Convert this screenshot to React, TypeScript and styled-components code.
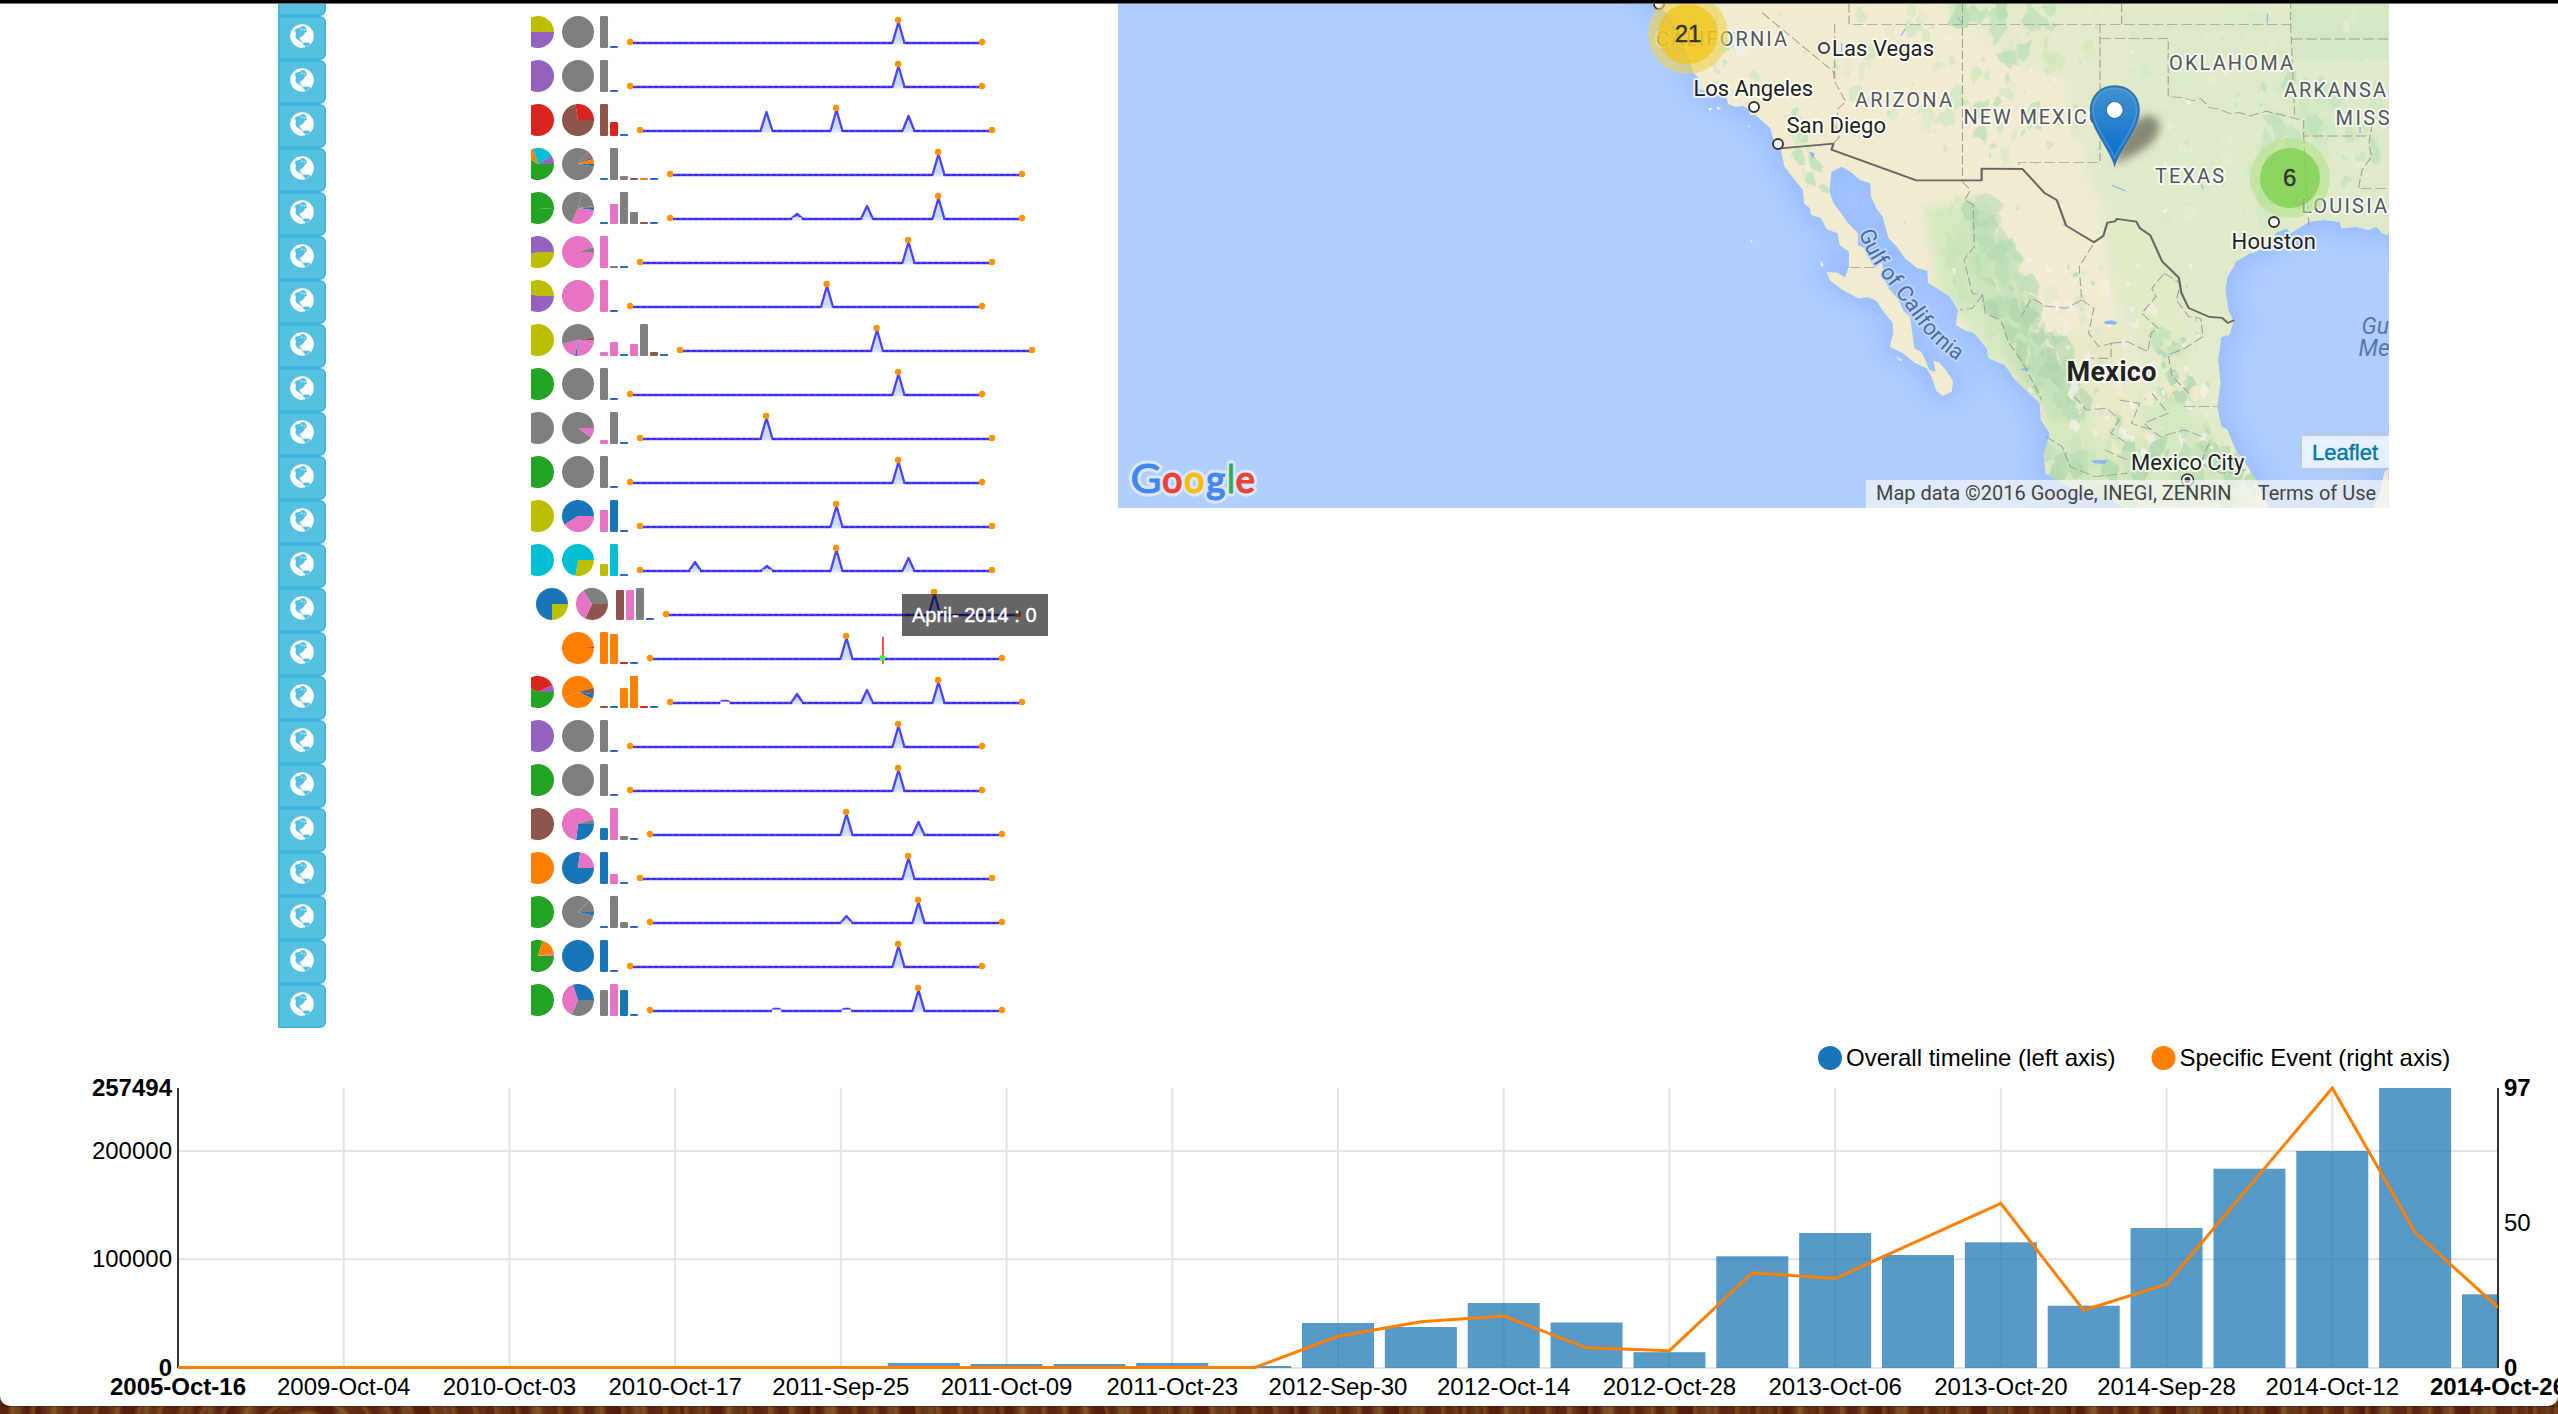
import React from "react";
import styled, { createGlobalStyle } from "styled-components";

const GlobalStyle = createGlobalStyle`
  html, body { margin: 0; padding: 0; }
  body { width: 2558px; height: 1414px; overflow: hidden; background: #5c2c10; }
  svg { display: block; }
`;

const sans = `"Liberation Sans", Arial, sans-serif`;
const mapFont = `Roboto, "Liberation Sans", sans-serif`;

/* ---------- palette ---------- */
const C = {
  blue: "#1876b8",
  orange: "#ff8000",
  green: "#22a422",
  red: "#d92420",
  purple: "#9563be",
  brown: "#8d564a",
  pink: "#e673c3",
  grey: "#7f7f7f",
  olive: "#bbbf00",
  cyan: "#00bed3",
  tail: "#2c68cc",
};
type Hue = keyof typeof C;

/* ---------- page shell ---------- */
const Desktop = styled.div`
  display: flex;
  flex-direction: column;
  width: 2558px;
  height: 1414px;
  overflow: hidden;
  background:
    linear-gradient(rgba(40, 14, 2, 0.55), rgba(40, 14, 2, 0) 3px) 0 1405px / 100% 9px no-repeat,
    repeating-radial-gradient(ellipse 70px 46px at 12% 101%, rgba(140, 92, 38, 0.55) 0 3px, rgba(86, 32, 12, 0.45) 7px 12px, transparent 15px 21px),
    repeating-linear-gradient(86deg, #5c2710 0 9px, #734420 14px 19px, #531e0b 27px 40px, #7b4e26 49px 53px, #5f2a12 66px 83px, #6d3c1a 92px 97px);
`;

const TopEdge = styled.div`
  flex: none;
  height: 3px;
  background: #000;
  border-bottom: 1px solid #6e6e6e;
`;

const Sheet = styled.main`
  flex: none;
  display: flex;
  flex-direction: column;
  height: 1402px;
  overflow: hidden;
  background: #fff;
  border-radius: 0 0 10px 10px;
`;

const Upper = styled.section`
  display: flex;
  height: 1026px;
`;

/* ---------- list of rows ---------- */
const RowList = styled.div`
  position: relative;
  flex: none;
  width: 840px;
  padding-left: 278px;
`;

const Row = styled.div`
  display: flex;
  align-items: flex-start;
  height: 44px;
`;

const GlobeButton = styled.button<{ $stub?: boolean }>`
  flex: none;
  display: flex;
  justify-content: center;
  align-items: flex-start;
  box-sizing: border-box;
  width: 48px;
  height: ${(p) => (p.$stub ? 12 : 44)}px;
  margin: 0;
  padding: 6px 0 0;
  border: 2px solid #40b6da;
  border-top-width: ${(p) => (p.$stub ? 0 : 2)}px;
  border-radius: ${(p) => (p.$stub ? "0 0 6px 0" : "0 6px 6px 0")};
  background: #56c0e0;
`;

const Glyphs = styled.div<{ $lead: number }>`
  display: flex;
  height: 32px;
  width: 587px;
  margin-left: 205px;
  overflow: hidden;
  & > :first-child { margin-left: ${(p) => p.$lead}px; }
`;

const Spacer = styled.span<{ $w: number }>`
  flex: none;
  width: ${(p) => p.$w}px;
`;

const Graphic = styled.svg`
  flex: none;
`;

const Tooltip = styled.div`
  position: absolute;
  left: 902px;
  top: 590px;
  box-sizing: border-box;
  width: 146px;
  height: 42px;
  padding-left: 10px;
  background: rgba(0, 0, 0, 0.6);
  color: #fff;
  font: 20px/42px ${sans};
  white-space: nowrap;
  -webkit-text-stroke: 0.4px #fff;
`;

type Slice = [Hue, number];
type RowData = {
  a: Slice[];
  b: Slice[];
  bars: Slice[];
  peaks: [number, number][];
  inset?: boolean;
  cursor?: number;
};

const one = (h: Hue): Slice[] => [[h, 360]];
const last: [number, number][] = [[258.5, 22]];

/* pie slices: [hue, end angle clockwise from east]; peaks: [distance from the first point, height] */
const rows: RowData[] = [
  { a: [["purple", 180], ["olive", 360]], b: one("grey"), bars: [["grey", 32]], peaks: last },
  { a: one("purple"), b: one("grey"), bars: [["grey", 32]], peaks: last },
  { a: one("red"), b: [["brown", 261], ["red", 360]], bars: [["brown", 32], ["red", 14]], peaks: [[116.5, 20], [186.5, 22], [258.5, 16]] },
  {
    a: [["green", 212], ["orange", 252], ["cyan", 330], ["purple", 360]],
    b: [["blue", 9], ["grey", 309], ["grey", 333], ["brown", 342], ["orange", 360]],
    bars: [["blue", 2], ["grey", 32], ["grey", 4], ["brown", 2], ["orange", 2]],
    peaks: last,
  },
  {
    a: [["green", 4], ["green", 360]],
    b: [["blue", 8], ["pink", 115], ["grey", 285], ["grey", 353], ["grey", 360]],
    bars: [["blue", 2], ["pink", 20], ["grey", 32], ["grey", 12], ["brown", 2]],
    peaks: [[117, 6], [187, 14], [258.5, 22]],
  },
  { a: [["olive", 164], ["purple", 360]], b: [["pink", 343], ["grey", 360]], bars: [["pink", 32], ["grey", 2]], peaks: last },
  { a: [["purple", 195], ["olive", 360]], b: one("pink"), bars: [["pink", 32]], peaks: [[187, 22]] },
  {
    a: one("olive"),
    b: [["pink", 21], ["pink", 94], ["blue", 101], ["pink", 166], ["grey", 349], ["brown", 360]],
    bars: [["pink", 4], ["pink", 14], ["blue", 2], ["pink", 12], ["grey", 32], ["brown", 4]],
    peaks: [[187, 22]],
  },
  { a: one("green"), b: one("grey"), bars: [["grey", 32]], peaks: last },
  { a: one("grey"), b: [["pink", 37], ["grey", 360]], bars: [["pink", 4], ["grey", 32]], peaks: [[116.5, 22]] },
  { a: one("green"), b: one("grey"), bars: [["grey", 32]], peaks: last },
  { a: one("olive"), b: [["pink", 148], ["blue", 360]], bars: [["pink", 22], ["blue", 32]], peaks: [[186.5, 22]] },
  { a: one("cyan"), b: [["olive", 99], ["cyan", 360]], bars: [["olive", 12], ["cyan", 32]], peaks: [[45, 10], [117, 6], [186.5, 22], [258.5, 14]] },
  {
    a: [["olive", 90], ["blue", 360]],
    b: [["brown", 115], ["pink", 238], ["grey", 360]],
    bars: [["brown", 30], ["pink", 30], ["grey", 32]],
    peaks: last,
    inset: true,
  },
  { a: [], b: [["orange", 356], ["red", 360]], bars: [["orange", 32], ["orange", 30], ["red", 2]], peaks: [[186.5, 22]], cursor: 243 },
  {
    a: [["green", 208], ["red", 335], ["purple", 360]],
    b: [["brown", 8], ["blue", 25], ["orange", 157], ["orange", 345], ["brown", 360]],
    bars: [["brown", 2], ["blue", 2], ["orange", 20], ["orange", 32], ["red", 2]],
    peaks: [[45, 2.5], [117, 10], [187, 14], [258.5, 22]],
  },
  { a: one("purple"), b: one("grey"), bars: [["grey", 32]], peaks: last },
  { a: one("green"), b: one("grey"), bars: [["grey", 32]], peaks: last },
  { a: one("brown"), b: [["blue", 97], ["pink", 343], ["grey", 360]], bars: [["blue", 12], ["pink", 32], ["grey", 4]], peaks: [[186.5, 22], [258.5, 14]] },
  { a: one("orange"), b: [["blue", 278], ["pink", 360]], bars: [["blue", 32], ["pink", 10]], peaks: last },
  { a: one("green"), b: [["blue", 14], ["grey", 315], ["grey", 360]], bars: [["blue", 2], ["grey", 32], ["grey", 6]], peaks: [[186.5, 8], [258.5, 22]] },
  { a: [["green", 287], ["orange", 352], ["pink", 360]], b: one("blue"), bars: [["blue", 32]], peaks: last },
  { a: one("green"), b: [["grey", 114], ["pink", 252], ["blue", 360]], bars: [["grey", 26], ["pink", 32], ["blue", 26]], peaks: [[116.5, 2.5], [186.5, 2.5], [258.5, 22]] },
];

const Pie = ({ slices }: { slices: Slice[] }) => {
  let from = 0;
  const at = (deg: number) => {
    const r = (deg * Math.PI) / 180;
    return `${16 + 16 * Math.cos(r)} ${16 + 16 * Math.sin(r)}`;
  };
  return (
    <Graphic width="32" height="32">
      {slices.length === 1 && <circle cx="16" cy="16" r="16" fill={C[slices[0][0]]} />}
      {slices.length > 1 &&
        slices.map(([hue, to], i) => {
          const d = `M16 16 L${at(from)} A16 16 0 ${to - from > 180 ? 1 : 0} 1 ${at(to)} Z`;
          from = to;
          return <path key={i} d={d} fill={C[hue]} />;
        })}
    </Graphic>
  );
};

const MiniBars = ({ bars }: { bars: Slice[] }) => {
  const all: Slice[] = [...bars, ["tail", 2]];
  return (
    <Graphic width={all.length * 10} height="32">
      {all.map(([hue, h], i) => (
        <rect key={i} x={i * 10} y={32 - h} width="8" height={h} rx={h > 3 ? 1.2 : 0.8} fill={C[hue]} />
      ))}
    </Graphic>
  );
};

const base = 27;
const Spark = ({ peaks, cursor }: { peaks: [number, number][]; cursor?: number }) => {
  const mids = peaks.map(([x, h]): [number, number] => [x + 20, h]);
  const pts = mids
    .map(([x, h]) =>
      h < 4
        ? `${x - 5} ${base} L${x - 3} ${base - h + 0.5} L${x + 3} ${base - h + 0.5} L${x + 5} ${base}`
        : `${x - 6} ${base} L${x} ${base - h + 1} L${x + 6} ${base}`
    )
    .join(" L");
  const top = mids.find((p) => p[1] === 22)!;
  return (
    <Graphic width="372" height="32">
      {mids.map(([x, h], i) => (
        <path key={i} d={`M${x - 6} ${base} L${x} ${base - h + 1} L${x + 6} ${base} Z`} fill="#c9dcfa" />
      ))}
      <path d={`M10 ${base} L${pts} L362 ${base}`} fill="none" stroke="#4a42ff" strokeWidth="2.3" strokeLinejoin="round" />
      <path d={`M10 ${base} H362`} stroke="#2f20e6" strokeWidth="2" strokeDasharray="4 2" opacity="0.6" />
      {mids.map(([x, h], i) => (
        <path key={i} d={`M${x - 4.6} ${base} H${x + 4.6}`} stroke={h > 4 ? "#dbe7fc" : "#fff"} strokeWidth="2.8" />
      ))}
      {cursor && <path d={`M${cursor - 10} 4.7 V31.7`} stroke="none" />}
      {cursor && <path d={`M${cursor} 4.7 V31.7`} stroke="#ff4b4b" strokeWidth="2" />}
      {cursor && <circle cx={cursor - 0.6} cy="26" r="3" fill="#3df13d" />}
      <circle cx="10" cy="26" r="3.2" fill="#ff9300" />
      <circle cx="362" cy="26" r="3.2" fill="#ff9300" />
      <circle cx={top[0] - 0.4} cy="4" r="3.2" fill="#ff9300" />
    </Graphic>
  );
};

const Globe = () => (
  <Graphic width="24" height="24" viewBox="0 0 24 24">
    <circle cx="12" cy="12" r="11.8" fill="#fff" />
    <path
      fill="#56c0e0"
      d="M5.2 5.6 7 4.2 9.6 4 11 2.6 14.4 2 15.6 3 14.8 3.8 16.6 4.2 16.2 5.6 16.9 7 15.4 8.2 14.2 10 13.2 11.6 12 12.6 10.4 13.2 9.4 14.4 9.4 15.4 10.8 15.4 11.2 17 12.6 18 12 18.8 10 17 8 16 6.2 14.6 5.4 12 6 9.4 5.2 8Z M12.2 19.4 14.4 18.6 19.8 18.8 20 20.4 18 21.6 15.4 23.2 14.6 21.6Z"
    />
    <path fill="#fff" d="M10.6 5 12.6 4.4 12.8 5.2 11 5.8Z M13.6 5.8 15 5.6V6.6H13.8Z" />
  </Graphic>
);

/* ---------- map ---------- */
const MapPane = styled.div`
  position: relative;
  flex: none;
  width: 1270.6px;
  height: 504px;
  overflow: hidden;
  background: #b0cfff;
`;

const Cluster = styled.div<{ $x: number; $y: number; $in: string; $out: string }>`
  position: absolute;
  left: ${(p) => p.$x - 40}px;
  top: ${(p) => p.$y - 40}px;
  display: grid;
  place-items: center;
  width: 80px;
  height: 80px;
  border-radius: 50%;
  background: ${(p) => p.$out};
  font: 24px/60px ${sans};
  color: #333;
  text-align: center;
  -webkit-text-stroke: 0.4px #333;
  & > span {
    width: 60px;
    height: 60px;
    border-radius: 50%;
    background: ${(p) => p.$in};
  }
`;

const LeafletTag = styled.div`
  position: absolute;
  right: 0;
  top: 432px;
  width: 86.6px;
  height: 32px;
  padding-left: 10px;
  box-sizing: border-box;
  background: rgba(255, 255, 255, 0.7);
  box-shadow: 0 0 10px rgba(190, 190, 190, 0.8);
  color: #0078a8;
  font: 22px/33px ${sans};
  -webkit-text-stroke: 0.4px #0078a8;
`;

const Credits = styled.div`
  position: absolute;
  right: 0;
  bottom: 0;
  display: flex;
  justify-content: space-between;
  box-sizing: border-box;
  width: 522.6px;
  height: 28px;
  padding: 0 12.5px 0 10px;
  background: rgba(245, 245, 245, 0.7);
  color: #444;
  font: 20px/27px ${mapFont};
  white-space: nowrap;
`;

const land =
  "M-275 0 L-262 12 -235 32 -210 70 -190 130 -172 180 -164 215 -149 238 -148 268 -118 280 -82 295 -78 312 -62 320 -40 318 -28 328 -24 345 -12 345 0 357 " +
  "25 385 35 425 50 440 60 500 85 540 105 570 108 610 122 625 125 645 150 655 163 688 190 700 195 735 218 755 218 800 208 832 190 818 163 816 172 842 200 868 240 895 265 892 285 902 300 930 325 970 326 1000 318 1040 350 1060 378 1088 408 1105 420 1130 432 1172 447 1188 470 1175 473 1142 455 1110 440 1088 425 1082 430 1115 415 1110 405 1080 395 1055 378 1045 372 990 368 950 350 930 340 900 315 865 303 835 300 790 282 770 265 750 240 735 240 700 215 668 205 650 180 610 170 575 175 515 " +
  "200 500 225 518 245 540 270 550 272 590 285 625 300 650 315 715 335 740 355 775 385 805 410 812 412 850 440 870 465 890 485 930 480 975 500 990 525 1000 555 1045 560 1075 600 1095 625 1140 660 1180 685 1210 688 1260 710 1300 695 1370 700 1420 740 1450 790 1480 860 1500 900 1530 1540 1530 1540 1405 1530 1415 1518 1480 1500 1530 1250 1530 " +
  "1215 1440 1195 1400 1165 1350 1145 1290 1130 1280 1120 1220 1128 1150 1122 1080 1130 1010 1150 1005 1160 962 1148 935 1140 870 1145 830 1160 800 1165 785 1200 760 1215 755 1255 728 1262 700 1290 685 1300 700 1345 665 1380 660 1420 665 1425 685 1460 680 1490 690 1510 680 1525 700 1540 705 L1540 0Z";

const rnd = (() => {
  let s = 9127;
  return () => ((s = (s * 16807) % 2147483647) / 2147483647);
})();

type Patch = { d: string; fill: string; o: number };
const scatter = (n: number, x0: number, y0: number, w: number, h: number, slope: number, size: number, fills: string[], o: number): Patch[] =>
  Array.from({ length: n }, () => {
    const y = y0 + rnd() * h;
    const x = x0 + rnd() * w + slope * (y - y0);
    const k = size * (0.3 + rnd());
    const pts = Array.from({ length: 7 }, (_, i) => {
      const a = (i / 7) * Math.PI * 2;
      const r = k * (0.3 + rnd());
      return `${(x + Math.cos(a) * r * 0.8 + Math.sin(a) * r * slope * 0.7).toFixed(1)} ${(y + Math.sin(a) * r * 1.3).toFixed(1)}`;
    });
    return { d: `M${pts.join("L")}Z`, fill: fills[Math.floor(rnd() * fills.length)], o };
  });

const patches: Patch[] = [
  ...scatter(70, 180, 0, 640, 480, 0, 22, ["#dce9c6", "#d3e7c0", "#e9e8cc"], 0.8),
  ...scatter(24, 500, 0, 240, 440, 0, 24, ["#bfe1b9", "#cfe6be"], 0.8),
  ...scatter(14, 480, 0, 250, 90, 0, 32, ["#b9dfb5", "#c7e4bd"], 0.9),
  ...scatter(20, -240, 0, 150, 250, 0.35, 20, ["#bfe4c0", "#d2e8c8", "#f1efe6"], 0.9),
  ...scatter(24, 40, 320, 60, 260, 0.3, 16, ["#c3e3bc", "#dce9c6"], 0.9),
  ...scatter(45, 860, 20, 640, 640, 0, 24, ["#e4edd2", "#d6e8c3", "#dcebc8"], 0.7),
  ...scatter(60, 1220, 230, 300, 420, 0, 30, ["#bfe1b9", "#c7e4c0", "#d3e8c6"], 0.75),
  ...scatter(50, 400, 620, 130, 600, 0.38, 34, ["#d6e8c2", "#cce5bd"], 0.8),
  ...scatter(60, 500, 600, 70, 620, 0.38, 30, ["#bbddb4", "#b3d8ae", "#c3e1bb"], 0.7),
  ...scatter(40, 560, 900, 90, 340, 0.4, 24, ["#b0d6ab", "#bbddb4"], 0.7),
  ...scatter(60, 690, 780, 360, 460, 0.1, 18, ["#dce9c6", "#e7eacb", "#f1efe0"], 0.8),
  ...scatter(20, 950, 990, 70, 200, 0.2, 18, ["#b3d8ae", "#c3e1bb"], 0.8),
  ...scatter(50, 740, 1160, 420, 230, 0.1, 18, ["#cce5bd", "#f2f0ea", "#bfe1b9", "#f1e9cb"], 0.8),
  ...scatter(60, 700, 1340, 520, 160, 0, 30, ["#bbddb4", "#b3d8ae", "#cbe3bd"], 0.8),
  ...scatter(90, 0, 20, 1500, 640, 0, 6, ["#f3f1ea", "#cfe6be"], 0.9),
  ...scatter(70, 240, 640, 820, 720, 0.1, 7, ["#f3f1ea", "#b9dfb5"], 0.9),
];

const stateLines = [
  "M218 12 V73 H1300 V12 M886 12 V73 M496 12 V545",
  "M833 73 V488 H634 V505",
  "M833 115 H1000 V290 L1030 292 1060 302 1080 296 1100 322 1125 328 1150 340 1175 338 1200 348 1240 334 1280 345 1332 362 V408 H1495",
  "M1300 73 L1310 350 M1303 117 H1540",
  "M5 38 L180 215 183 245 210 305 192 325 185 380 194 412 178 432",
  "M183 73 V235",
  "M1500 370 L1492 430 1498 470 1475 510 1466 566 H1540 M1332 408 L1340 590 1345 680",
  "M220 803 H290",
  "M496 545 L515 570 502 600 522 615 525 740 500 780 520 880 545 885 552 940 590 960 610 1030 640 1080 670 1150 690 1200",
  "M545 885 L520 925 490 930 M815 735 L782 800 788 900 750 925 700 918 665 895 640 950",
  "M788 900 L818 925 805 1000 830 1040 860 1030 860 1075 810 1075 M860 1030 L900 1025 950 1055 958 1000 975 985 935 940 970 890 960 865 990 820",
  "M990 820 L1030 850 1020 900 1050 950 1080 955 1085 1010 1040 1045 1000 1065 1010 1130 1050 1180",
  "M770 1190 L800 1230 850 1225 880 1260 860 1300 900 1330 M960 1180 L1000 1240 940 1270 980 1310 1040 1290 1085 1310 M1040 1220 H1120",
  "M700 1310 L740 1340 760 1400 820 1430 900 1420 M880 1200 L930 1210 910 1270 960 1290",
  "M845 1350 L900 1380 M1100 1330 L1080 1390 1130 1420 1190 1410",
];

type LabelProps = { x: number; y: number; w?: number; size?: number; spaced?: boolean; children: string };
const MapLabel = styled.text<{ $state?: boolean }>`
  font-family: ${mapFont};
  fill: ${(p) => (p.$state ? "#55565a" : "#222")};
  paint-order: stroke;
  stroke: rgba(255, 255, 255, 0.75);
  stroke-width: 4px;
  stroke-linejoin: round;
`;
const Label = ({ x, y, w, size = 22, spaced, children }: LabelProps) => (
  <MapLabel x={x} y={y} textLength={w} fontSize={size} $state={spaced}>
    {children}
  </MapLabel>
);

const cities: [number, number][] = [[706, 44], [636, 103], [660, 140], [1156, 218], [541, 0]];

const LogoLetters = () => {
  const letters: [string, string, number, number][] = [
    ["G", "#4285f4", 12.5, 31],
    ["o", "#ea4335", 44, 20.5],
    ["o", "#fbbc05", 66, 20.5],
    ["g", "#4285f4", 88, 19.5],
    ["l", "#34a853", 109.5, 7],
    ["e", "#ea4335", 117.5, 19.5],
  ];
  const draw = (halo: boolean) =>
    letters.map(([ch, col, x, w], i) => (
      <text
        key={i}
        x={x}
        y={488.5}
        fontSize={ch === "G" ? 41 : 39}
        textLength={w}
        lengthAdjust="spacingAndGlyphs"
        fontFamily={`Lato, "Open Sans", sans-serif`}
        fontWeight={ch === "G" ? 400 : 600}
        fill={col}
        stroke={halo ? "#dbe8fd" : col}
        strokeWidth={halo ? 7 : 1}
        strokeLinejoin="round"
        aria-hidden={halo}
      >
        {ch}
      </text>
    ));
  return (
    <g>
      <g>{draw(true)}</g>
      <g>{draw(false)}</g>
    </g>
  );
};

const MapDrawing = () => (
  <Graphic width="1271" height="504">
    <defs>
      <clipPath id="land"><path d={land} /></clipPath>
      <filter id="haze" x="-20%" y="-20%" width="140%" height="140%"><feGaussianBlur stdDeviation="36" /></filter>
      <filter id="soft" x="-20%" y="-20%" width="140%" height="140%"><feGaussianBlur stdDeviation="14" /></filter>
      <filter id="shade" x="-50%" y="-50%" width="200%" height="200%"><feGaussianBlur stdDeviation="4.5" /></filter>
      <linearGradient id="pin" x1="0" y1="0" x2="0" y2="1">
        <stop offset="0" stopColor="#4292ce" />
        <stop offset="1" stopColor="#086ccd" />
      </linearGradient>
      <path id="gulf" d="M741 228 C752 262 772 280 790 306 C808 332 818 342 838 356" />
    </defs>
    <g transform="translate(642 -4) scale(.4082 .3333)">
      <path d={land} fill="#93b7ff" stroke="#93b7ff" strokeWidth="60" filter="url(#haze)" opacity="0.78" />
      <path d={land} fill="#f1ebcf" />
      <g clipPath="url(#land)">
        <path d="M830 0 H1560 V1000 H1060 L1020 840 940 660 860 650 810 560 780 300Z" fill="#deeac8" filter="url(#soft)" />
        <path d="M420 0 H900 V500 L780 420 760 250 640 200 560 120Z" fill="#e5eaca" filter="url(#soft)" />
        <path d="M1300 0 H1560 V180 H1310Z" fill="#d5e8c3" />
        <path d="M400 620 L520 600 620 800 660 1000 780 1150 1080 1180 1220 1530 680 1530 700 1200 560 1060 440 880Z" fill="#d6e8c2" filter="url(#soft)" />
        <path d="M840 640 L960 660 1060 900 1080 1100 960 1180 900 1000 860 860Z" fill="#dfeac7" filter="url(#soft)" />
        <path d="M700 1010 L900 960 940 1300 840 1330 780 1180Z" fill="#e9e9ca" filter="url(#soft)" />
        <path d="M1040 900 L1160 920 1120 1220 1200 1400 1060 1240Z" fill="#e0ebc9" filter="url(#soft)" />
        <path d="M515 590 L560 620 590 780 650 880 660 1000 740 1120 770 1240 720 1250 640 1130 600 1000 540 900 515 780Z" fill="#b7dbb1" opacity="0.8" filter="url(#soft)" />
        {patches.map((p, i) => <path key={i} d={p.d} fill={p.fill} opacity={p.o} />)}
        <g fill="none" stroke="#8fb4ee" strokeWidth="3">
          <path d="M345 108 L356 86 M485 52 L495 70 M1243 40 V70 M862 556 L896 573 M1078 545 L1086 568 M1470 380 V400 M200 130 V155" />
        </g>
        <path d="M842 965 L860 961 876 967 870 974 846 972Z M810 1382 L850 1380 845 1392 820 1390Z M120 455 L134 460 130 476Z M635 1108 L660 1102 655 1112Z" fill="#8ab3f5" />
      </g>
      <path d="M-126 325 L-118 324 -122 333Z M-106 320 L-94 327 -104 328Z" fill="#fff" />
      <path d="M-30 374 L-22 382 -28 380Z M-22 718 L-17 732 -24 724Z M148 780 L156 796 150 800Z M332 1068 L348 1080 344 1084Z" fill="#f6f4e6" />
      <g fill="none" stroke="#9d9d9d" strokeWidth="2.6" strokeDasharray="26 9">
        {stateLines.map((d) => <path key={d} d={d} />)}
      </g>
      <path
        d="M50 445 L180 431 175 449 383 541 543 541 543 506 643 507 697 579 727 600 750 677 818 727 841 708 851 668 870 664 874 657 922 665 931 685 956 706 985 784 1026 833 1032 878 1050 924 1101 951 1132 954 1146 969 1162 960"
        fill="none"
        stroke="#666"
        strokeWidth="5.4"
        strokeLinejoin="round"
      />
    </g>
    {cities.map(([x, y]) => (
      <circle key={`${x}`} cx={x} cy={y} r="5" fill="#fff" stroke="#333" strokeWidth="1.9" />
    ))}
    <circle cx="1069.5" cy="476" r="6" fill="#fff" stroke="#333" strokeWidth="1.6" />
    <circle cx="1069.5" cy="476" r="3" fill="#333" />
    <Label x={538} y={42} w={131} size={20} spaced>CALIFORNIA</Label>
    <Label x={714} y={52} w={102}>Las Vegas</Label>
    <Label x={575.5} y={92} w={119.5}>Los Angeles</Label>
    <Label x={668.5} y={129} w={99.5}>San Diego</Label>
    <Label x={737} y={103} w={97} size={20} spaced>ARIZONA</Label>
    <Label x={845.5} y={120} w={139} size={20} spaced>NEW MEXICO</Label>
    <Label x={1051} y={65.5} w={124} size={20} spaced>OKLAHOMA</Label>
    <Label x={1166} y={92.5} w={102} size={20} spaced>ARKANSA</Label>
    <Label x={1217.5} y={121} w={54} size={20} spaced>MISS</Label>
    <Label x={1037} y={179} w={69} size={20} spaced>TEXAS</Label>
    <Label x={1183} y={209} w={86} size={20} spaced>LOUISIA</Label>
    <Label x={1113.5} y={244.5} w={84.5}>Houston</Label>
    <Label x={1013} y={465.5} w={113.5}>Mexico City</Label>
    <text x="948.5" y="376.5" fontFamily={mapFont} fontSize="27" fontWeight="700" fill="#222" textLength="90" stroke="#fff" strokeOpacity=".7" strokeWidth="4" paintOrder="stroke">Mexico</text>
    <g fontFamily={mapFont} fontSize="23" fontStyle="italic" fill="#5777a6">
      <text x="1243.5" y="329.5">Gu</text>
      <text x="1240.5" y="351.5">Me</text>
      <text fontStyle="normal" fill="#4c6c99" fontSize="22" stroke="#bdd5ff" strokeWidth="3.5" paintOrder="stroke">
        <textPath href="#gulf" textLength="164">Gulf of California</textPath>
      </text>
    </g>
    <LogoLetters />
    <path d="M997 160 C1001 140 1010 116 1028 112 C1044 110 1046 128 1032 140 C1022 148 1006 156 997 160Z" fill="#4c4a40" opacity="0.6" filter="url(#shade)" />
    <path
      d="M996.7 160 C992 144 972.8 124 972.8 106 C972.8 92 983 82.3 996.7 82.3 C1010.4 82.3 1020.8 92 1020.8 106 C1020.8 124 1001.5 144 996.7 160Z"
      fill="url(#pin)"
      stroke="#2e74b3"
      strokeWidth="2"
    />
    <path
      d="M996.7 154 C991.5 140 975 122 975 106 C975 93.5 984.5 84.5 996.7 84.5 C1009 84.5 1018.6 93.5 1018.6 106 C1018.6 122 1002 140 996.7 154Z"
      fill="none"
      stroke="#6fb0de"
      strokeOpacity=".45"
      strokeWidth="1.6"
    />
    <circle cx="996.7" cy="106" r="8.6" fill="#fff" stroke="#2e74b3" strokeWidth="1.4" />
  </Graphic>
);

/* ---------- timeline chart ---------- */
const ChartArea = styled.section`
  height: 376px;
`;
const AxisText = styled.text<{ $bold?: boolean }>`
  font: ${(p) => (p.$bold ? 700 : 400)} 24px ${sans};
  fill: #000;
`;

const step = 2320 / 28;
const X = (k: number) => 178 + step * k;
const overall = [1.5, 1.5, 1.5, 1.5, 1.5, 1.5, 1.5, 1.5, 1.5, 5, 4, 4, 5, 2, 45, 41, 65, 45.5, 15.8, 111.7, 135, 113, 125.7, 62.3, 140, 199.3, 217, 280, 73.7];
const events = [0, 0, 0, 0, 0, 0, 0, 0, 0, 0, 0, 0, 0, 0, 11, 16, 18, 7, 6, 33, 31, 44, 57, 20, 29, 63, 97, 47, 21];
const dates = [
  "2005-Oct-16", "2009-Oct-04", "2010-Oct-03", "2010-Oct-17", "2011-Sep-25", "2011-Oct-09", "2011-Oct-23", "2012-Sep-30",
  "2012-Oct-14", "2012-Oct-28", "2013-Oct-06", "2013-Oct-20", "2014-Sep-28", "2014-Oct-12", "2014-Oct-26",
];

/* the drawing keeps page coordinates: its top edge sits at y = 1030 */
const Timeline = () => (
  <Graphic width="2558" height="376" viewBox="0 1030 2558 376">
    <defs>
      <clipPath id="plot"><rect x="178" y="1086" width="2320" height="283" /></clipPath>
    </defs>
    <g stroke="#e4e4e4" strokeWidth="2">
      {dates.slice(1, -1).map((d, i) => <path key={d} d={`M${X(2 * i + 2)} 1088 V1368`} />)}
      <path d="M178 1151 H2498 M178 1259.3 H2498 M178 1368 H2498" />
    </g>
    <g clipPath="url(#plot)">
      {overall.map((h, k) => (
        <rect key={k} x={X(k) - 36} y={1368 - h} width="72" height={h} fill="#1f77b4" fillOpacity="0.75" />
      ))}
    </g>
    <path d="M178 1088 V1368 M2498 1088 V1368" stroke="#333" strokeWidth="2" />
    <g clipPath="url(#plot)">
      <polyline
        points={events.map((v, k) => `${X(k)},${1367.5 - (v / 97) * 280 + (v === 0 ? 0 : 0.5)}`).join(" ")}
        fill="none"
        stroke={C.orange}
        strokeWidth="3"
      />
    </g>
    {dates.map((d, i) => (
      <AxisText key={d} x={X(2 * i)} y="1395" textAnchor="middle" $bold={i === 0 || i === 14}>{d}</AxisText>
    ))}
    <AxisText x="172" y="1096" textAnchor="end" $bold>257494</AxisText>
    <AxisText x="172" y="1158.5" textAnchor="end">200000</AxisText>
    <AxisText x="172" y="1267" textAnchor="end">100000</AxisText>
    <AxisText x="172" y="1376" textAnchor="end" $bold>0</AxisText>
    <AxisText x="2504" y="1096" $bold>97</AxisText>
    <AxisText x="2504" y="1231">50</AxisText>
    <AxisText x="2504" y="1376" $bold>0</AxisText>
    <circle cx="1830" cy="1058" r="12" fill={C.blue} />
    <AxisText x="1846" y="1066">Overall timeline (left axis)</AxisText>
    <circle cx="2163.5" cy="1058" r="12" fill={C.orange} />
    <AxisText x="2179.5" y="1066">Specific Event (right axis)</AxisText>
  </Graphic>
);

export default function App() {
  return (
    <>
      <GlobalStyle />
      <Desktop>
        <TopEdge />
        <Sheet>
          <Upper>
            <RowList>
              <GlobeButton $stub />
              {rows.map((r, i) => (
                <Row key={i}>
                  <GlobeButton><Globe /></GlobeButton>
                  <Glyphs $lead={r.inset ? 5 : -9}>
                    <Pie slices={r.a} />
                    <Spacer $w={8} />
                    <Pie slices={r.b} />
                    <Spacer $w={r.inset ? 8 : 6} />
                    <MiniBars bars={r.bars} />
                    <Spark peaks={r.peaks} cursor={r.cursor} />
                  </Glyphs>
                </Row>
              ))}
              <Tooltip>April- 2014 : 0</Tooltip>
            </RowList>
            <MapPane>
              <MapDrawing />
              <Cluster $x={570} $y={30} $in="rgba(240,194,12,.68)" $out="rgba(241,211,87,.62)"><span>21</span></Cluster>
              <Cluster $x={1171.8} $y={174} $in="rgba(110,204,57,.62)" $out="rgba(181,226,140,.6)"><span>6</span></Cluster>
              <LeafletTag>Leaflet</LeafletTag>
              <Credits>
                <span>Map data ©2016 Google, INEGI, ZENRIN</span>
                <span>Terms of Use</span>
              </Credits>
            </MapPane>
          </Upper>
          <ChartArea><Timeline /></ChartArea>
        </Sheet>
      </Desktop>
    </>
  );
}
